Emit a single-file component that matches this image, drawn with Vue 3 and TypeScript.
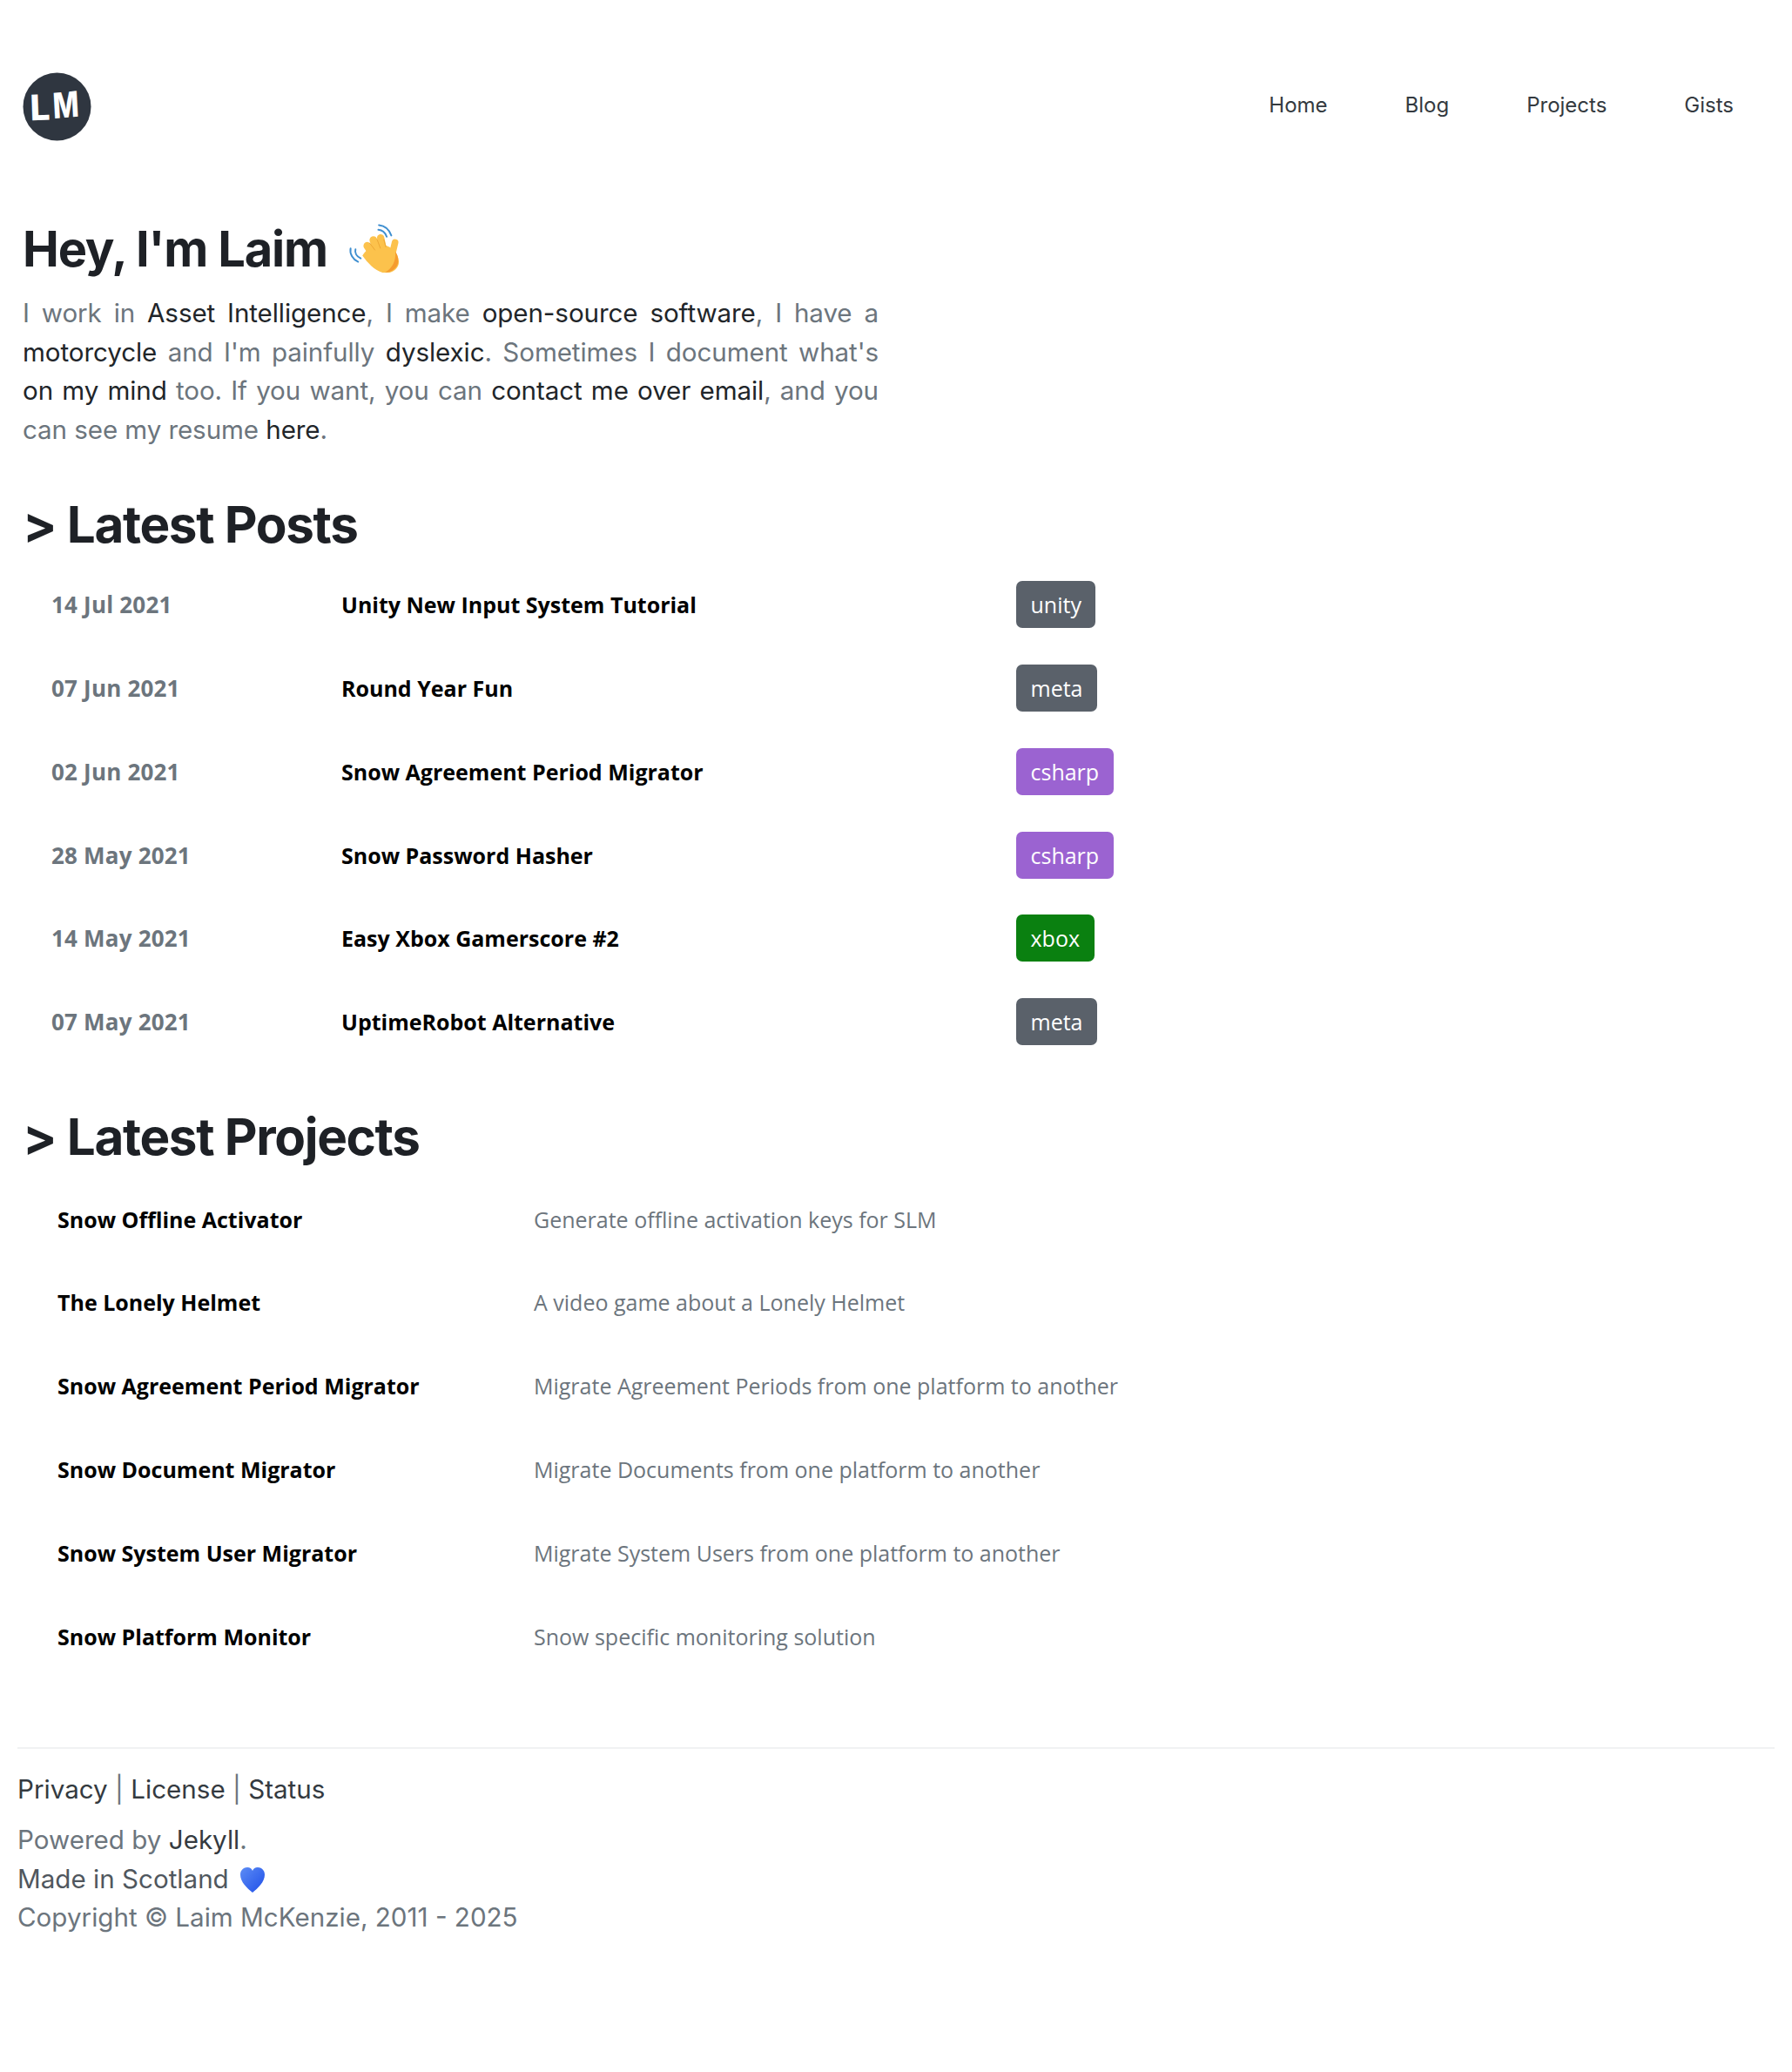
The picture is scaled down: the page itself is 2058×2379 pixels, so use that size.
<script setup lang="ts">
interface Post {
  date: string
  title: string
  tag: string
  color: string
}

const navLinks = ['Home', 'Blog', 'Projects', 'Gists']

const posts: Post[] = [
  { date: '14 Jul 2021', title: 'Unity New Input System Tutorial', tag: 'unity', color: 'grey' },
  { date: '07 Jun 2021', title: 'Round Year Fun', tag: 'meta', color: 'grey' },
  { date: '02 Jun 2021', title: 'Snow Agreement Period Migrator', tag: 'csharp', color: 'purple' },
  { date: '28 May 2021', title: 'Snow Password Hasher', tag: 'csharp', color: 'purple' },
  { date: '14 May 2021', title: 'Easy Xbox Gamerscore #2', tag: 'xbox', color: 'green' },
  { date: '07 May 2021', title: 'UptimeRobot Alternative', tag: 'meta', color: 'grey' }
]

const projects = [
  { name: 'Snow Offline Activator', text: 'Generate offline activation keys for SLM' },
  { name: 'The Lonely Helmet', text: 'A video game about a Lonely Helmet' },
  { name: 'Snow Agreement Period Migrator', text: 'Migrate Agreement Periods from one platform to another' },
  { name: 'Snow Document Migrator', text: 'Migrate Documents from one platform to another' },
  { name: 'Snow System User Migrator', text: 'Migrate System Users from one platform to another' },
  { name: 'Snow Platform Monitor', text: 'Snow specific monitoring solution' }
]
</script>

<template>
  <div class="page">
    <header class="header">
      <svg class="logo" viewBox="0 0 80 80">
        <circle cx="40" cy="40" r="39.5" fill="#2f3640" />
        <text class="logo-letter" transform="translate(9 56) rotate(-2)">L</text>
        <text class="logo-letter" transform="translate(36 54) scale(.78 1) rotate(-4)">M</text>
      </svg>
      <nav class="nav">
        <a v-for="link in navLinks" :key="link">{{ link }}</a>
      </nav>
    </header>

    <main class="main">
      <h1 class="title">
        Hey, I'm Laim
        <svg class="wave" viewBox="50 40 190 180">
          <g fill="none" stroke="#3f8fd0" stroke-width="6" stroke-linecap="round">
            <path d="M165 56c20 2 36 16 43 36" />
            <path d="M163 72c12 1 24 10 29 24" />
            <path d="M67 137c-4 18 8 38 26 46" />
            <path d="M84 140c-3 11 3 24 18 31" />
          </g>
          <g fill="none" stroke="#fcc24c" stroke-linecap="round">
            <path d="M160 180L125 128" stroke-width="27" />
            <path d="M172 170L146 108" stroke-width="27" />
            <path d="M186 165L171 100" stroke-width="25" />
            <path d="M208 170L221 116" stroke-width="23" />
          </g>
          <path
            d="M108 162c10-20 40-44 72-38 30 6 52 30 54 58 1 22-20 40-44 40-32 0-62-32-82-60z"
            fill="#fcc24c"
          />
          <path
            d="M186 220c26 0 46-18 46-40 0-14-4-24-10-32 2 30-8 56-36 72z"
            fill="#f59c2f"
          />
          <g fill="none" stroke="#e9a12f" stroke-width="2.500" stroke-linecap="round">
            <path d="M133 118l18 24" />
            <path d="M159 106l11 30" />
            <path d="M182 106l7 26" />
          </g>
        </svg>
      </h1>
      <p class="intro">
        I work in <a>Asset Intelligence</a>, I make <a>open-source software</a>, I have a
        <a>motorcycle</a> and I'm painfully <a>dyslexic</a>. Sometimes I document what's
        <a class="keep">on my mind</a> too. If you want, you can <a>contact me over email</a>, and you
        can see my resume <a>here</a>.
      </p>

      <h2 class="section">&gt; Latest Posts</h2>
      <div class="posts">
        <div v-for="post in posts" :key="post.date" class="row post-row">
          <span class="date">{{ post.date }}</span>
          <a class="name">{{ post.title }}</a>
          <span class="tag-cell">
            <span class="tag" :class="post.color">{{ post.tag }}</span>
          </span>
        </div>
      </div>

      <h2 class="section projects-title">&gt; Latest Projects</h2>
      <div class="projects">
        <div v-for="project in projects" :key="project.name" class="row project-row">
          <a class="name">{{ project.name }}</a>
          <span class="desc">{{ project.text }}</span>
        </div>
      </div>
    </main>

    <footer class="footer">
      <p class="links"><a>Privacy</a> | <a>License</a> | <a>Status</a></p>
      <p class="meta">
        Powered by <a>Jekyll</a>.<br />
        <span class="made">Made in Scotland</span>
        <svg class="heart" viewBox="0 0 32 32">
          <defs>
            <linearGradient id="heart-fill" x1="0" y1="0" x2="1" y2="1">
              <stop offset="0" stop-color="#5c8cf5" />
              <stop offset="1" stop-color="#1f4fe8" />
            </linearGradient>
          </defs>
          <path
            d="M16 31C10 26 2 19 2 10.500 2 5 6 2 10 2c3 0 5 1.500 6 4 1-2.500 3-4 6-4 4 0 8 3 8 8.500C30 19 22 26 16 31z"
            fill="url(#heart-fill)"
          />
        </svg><br />
        Copyright © Laim McKenzie, 2011 - 2025
      </p>
    </footer>
  </div>
</template>

<style>
body {
  background: #fff;
}
</style>

<style scoped>
.page {
  font-family: Inter, "Liberation Sans", sans-serif;
  color: #1e2126;
  height: 2379px;
  box-sizing: border-box;
  padding-top: 83px;
}

a {
  color: #212529;
}

.header {
  display: flex;
  justify-content: space-between;
  align-items: center;
  padding: 0 47px 0 26px;
}

.logo {
  width: 79px;
  height: 79px;
  display: block;
}

.logo-letter {
  font-family: Inter, sans-serif;
  font-weight: 800;
  font-size: 41px;
  fill: #fff;
}

.nav {
  display: flex;
  gap: 89px;
  font-size: 24px;
  margin-top: -5px;
  margin-right: 20px;
}

.nav a {
  color: #343a40;
}

.main {
  padding: 0 26px;
  margin-top: 91px;
}

.title {
  margin: 0;
  font-size: 56px;
  font-weight: 700;
  line-height: 67px;
  letter-spacing: -1.2px;
  display: flex;
  align-items: center;
  gap: 21px;
}

.wave {
  width: 63px;
  height: 60px;
  margin-top: -7px;
}

.intro {
  width: 983px;
  margin: 17px 0 0;
  font-size: 29.6px;
  line-height: 44.6px;
  color: #6c757d;
  text-align: justify;
  letter-spacing: -0.1px;
}

.keep {
  white-space: nowrap;
}

.section {
  margin: 53px 0 0;
  font-size: 58.4px;
  line-height: 67px;
  font-weight: 700;
  letter-spacing: -1.35px;
}

.projects-title {
  margin-top: 50px;
}

.posts {
  margin-top: 11px;
}

.row {
  display: grid;
  align-items: center;
  height: 95.8px;
  font-family: "Open Sans", sans-serif;
  font-size: 25px;
}

.post-row {
  grid-template-columns: 333px 775px auto;
  padding-left: 33px;
}

.project-row {
  grid-template-columns: 547px auto;
  padding-left: 40px;
}

.projects {
  margin-top: 13.5px;
}

.date {
  font-size: 26px;
  font-weight: 700;
  color: #6c757d;
  letter-spacing: 0.2px;
}

.name {
  font-weight: 700;
  color: #000;
}

.desc {
  color: #6c757d;
}

.tag {
  display: inline-block;
  height: 54px;
  line-height: 54px;
  padding: 0 16.5px;
  border-radius: 7px;
  color: #fff;
}

.grey {
  background: #5a616a;
}

.purple {
  background: #9b63d1;
}

.green {
  background: #0a8010;
}

.footer {
  margin: 79.5px 20px 0;
  border-top: 2px solid #f1f2f3;
  padding-top: 24px;
  font-size: 29.6px;
}

.links {
  margin: 0;
  line-height: 44px;
  color: #6c757d;
}

.links a,
.meta a {
  color: #343a40;
}

.meta {
  margin: 14px 0 0;
  line-height: 44.6px;
  color: #6c757d;
}

.made {
  color: #50575e;
}

.heart {
  width: 32px;
  height: 32px;
  vertical-align: -6px;
  margin-left: 11px;
}
</style>
